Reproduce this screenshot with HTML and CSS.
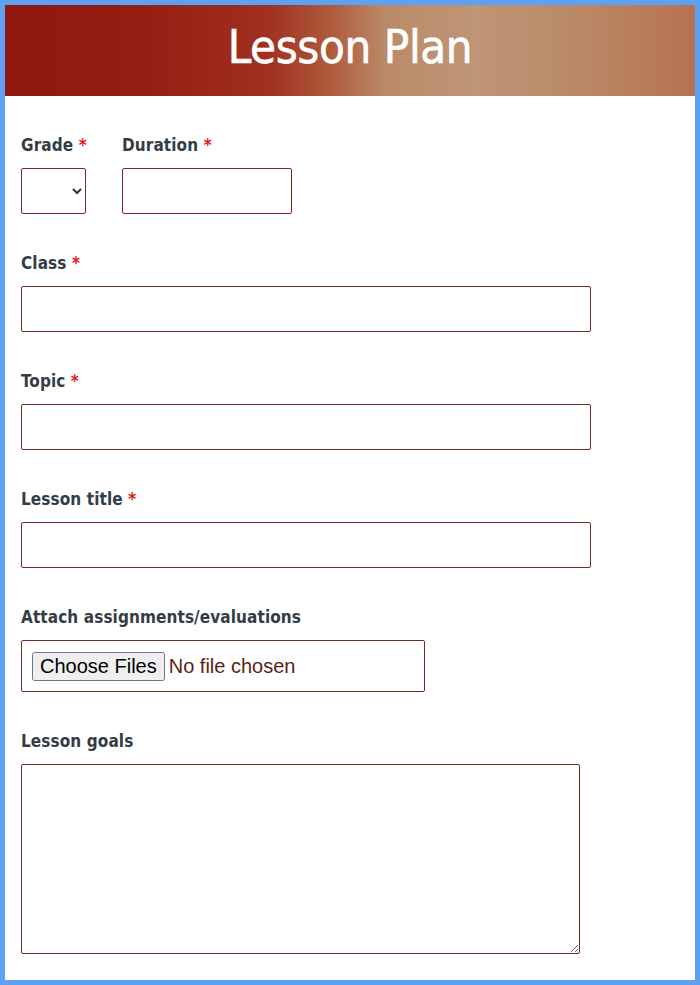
FILE: index.html
```html
<!DOCTYPE html>
<html>
<head>
<meta charset="utf-8">
<link rel="stylesheet" href="styles.css">
</head>
<body>
<div class="frame">
  <header class="banner"><h1>Lesson Plan</h1></header>
  <form class="form">
    <div class="row">
      <div class="field">
        <label class="label">Grade <span class="req">*</span></label>
        <select class="ctl select"><option></option></select>
      </div>
      <div class="field">
        <label class="label">Duration <span class="req">*</span></label>
        <input class="ctl dur" type="text">
      </div>
    </div>
    <div class="field">
      <label class="label">Class <span class="req">*</span></label>
      <input class="ctl wide" type="text">
    </div>
    <div class="field">
      <label class="label">Topic <span class="req">*</span></label>
      <input class="ctl wide" type="text">
    </div>
    <div class="field">
      <label class="label">Lesson title <span class="req">*</span></label>
      <input class="ctl wide" type="text">
    </div>
    <div class="field">
      <label class="label">Attach assignments/evaluations</label>
      <div class="filebox"><input class="file" type="file" multiple></div>
    </div>
    <div class="field">
      <label class="label">Lesson goals</label>
      <textarea class="ctl goals"></textarea>
    </div>
  </form>
</div>
</body>
</html>
```
FILE: styles.css
```css
html, body { margin: 0; padding: 0; }
body { width: 700px; height: 985px; background: #5ea1f2; }
.frame {
  box-sizing: border-box;
  margin: 5px;
  width: 690px;
  height: 975px;
  background: #fff;
  overflow: hidden;
}
.banner {
  box-sizing: border-box;
  height: 91px;
  padding-bottom: 8px;
  display: flex;
  align-items: center;
  justify-content: center;
  background: linear-gradient(90deg, #8e1710 0%, #951e12 20%, #a0301f 38%, #ad5a3b 47%, #bb8a68 55%, #be9576 68%, #ba8a68 82%, #b7724f 100%);
}
.banner h1 {
  margin: 0;
  color: #fff;
  font-family: "DejaVu Sans Condensed", "Open Sans", sans-serif;
  font-weight: normal;
  font-size: 47px;
  letter-spacing: -0.4px;
  -webkit-text-stroke: 0.6px #fff;
}
.form {
  display: flex;
  flex-direction: column;
  gap: 38px;
  padding: 38px 16px 0 16px;
}
.row { display: flex; }
.row .field:first-child { width: 101px; }
.field { display: flex; flex-direction: column; gap: 12px; }
.label {
  font-family: "DejaVu Sans Condensed", "Open Sans", sans-serif;
  font-weight: bold;
  font-size: 17px;
  line-height: 22px;
  letter-spacing: 0.1px;
  color: #333d47;
  white-space: nowrap;
}
.req { color: #e8141c; }
.ctl {
  box-sizing: border-box;
  border: 1px solid #7b2a22;
  border-radius: 2px;
  background: #fff;
  height: 46px;
  margin: 0;
  font-size: 16px;
}
.select { width: 65px; color: #333; }
.dur { width: 170px; }
.wide { width: 570px; }
.filebox {
  box-sizing: border-box;
  width: 404px;
  height: 52px;
  border: 1px solid #7b2a22;
  border-radius: 2px;
  display: flex;
  align-items: center;
  padding-left: 10px;
}
.file {
  font-family: "Liberation Sans", Arial, sans-serif;
  font-size: 20px;
  color: #5b1e14;
}
.goals {
  width: 559px;
  height: 190px;
  resize: vertical;
}
```
